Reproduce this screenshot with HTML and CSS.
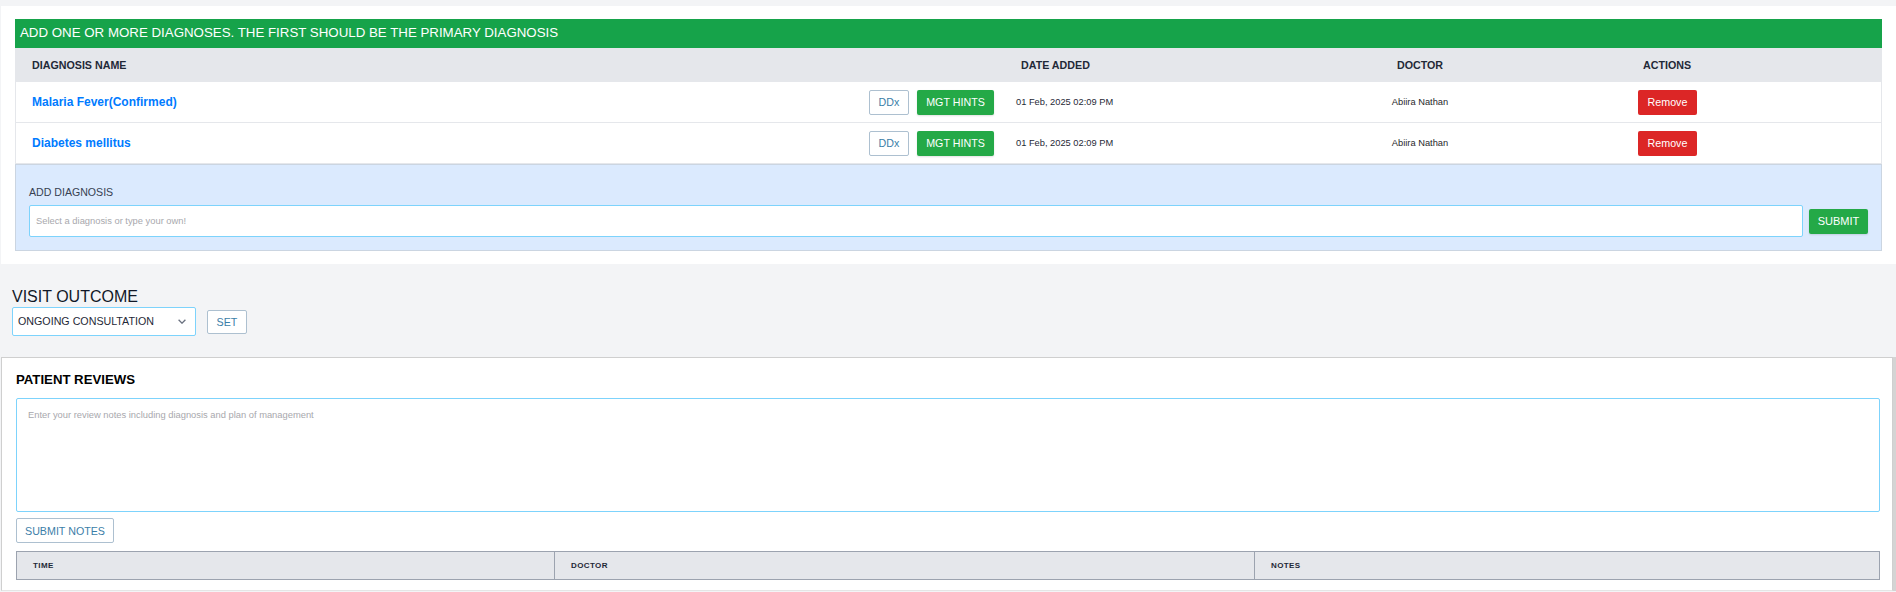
FILE: index.html
```html
<!DOCTYPE html>
<html lang="en">
<head>
<meta charset="utf-8">
<title>Diagnoses</title>
<link rel="stylesheet" href="styles.css">
</head>
<body>
<section class="panel">
  <div class="banner">ADD ONE OR MORE DIAGNOSES. THE FIRST SHOULD BE THE PRIMARY DIAGNOSIS</div>
  <table class="dx-table">
    <colgroup>
      <col class="col-name"><col class="col-date"><col class="col-doctor"><col class="col-actions">
    </colgroup>
    <thead>
      <tr>
        <th class="th-name">DIAGNOSIS NAME</th>
        <th class="th-date">DATE ADDED</th>
        <th class="th-center">DOCTOR</th>
        <th class="th-center">ACTIONS</th>
      </tr>
    </thead>
    <tbody>
      <tr>
        <td>
          <div class="name-cell">
            <a class="dx-link" href="#">Malaria Fever(Confirmed)</a>
            <div class="btn-group"><button class="btn btn-outline btn-ddx">DDx</button><button class="btn btn-green btn-hints">MGT HINTS</button></div>
          </div>
        </td>
        <td class="td-date">01 Feb, 2025 02:09 PM</td>
        <td class="td-doctor">Abiira Nathan</td>
        <td class="td-actions"><button class="btn btn-red">Remove</button></td>
      </tr>
      <tr>
        <td>
          <div class="name-cell">
            <a class="dx-link" href="#">Diabetes mellitus</a>
            <div class="btn-group"><button class="btn btn-outline btn-ddx">DDx</button><button class="btn btn-green btn-hints">MGT HINTS</button></div>
          </div>
        </td>
        <td class="td-date">01 Feb, 2025 02:09 PM</td>
        <td class="td-doctor">Abiira Nathan</td>
        <td class="td-actions"><button class="btn btn-red">Remove</button></td>
      </tr>
    </tbody>
  </table>
  <div class="add-box">
    <label class="add-label" for="dx">ADD DIAGNOSIS</label>
    <div class="add-row">
      <input id="dx" class="add-input" type="text" placeholder="Select a diagnosis or type your own!">
      <button class="btn btn-green btn-submit">SUBMIT</button>
    </div>
  </div>
</section>

<section class="outcome">
  <h2 class="outcome-title">VISIT OUTCOME</h2>
  <div class="outcome-row">
    <div class="select">
      <span>ONGOING CONSULTATION</span>
      <svg class="chev" viewBox="0 0 8 5" width="8" height="5" aria-hidden="true"><path d="M.6.8L4 4.2 7.4.8" fill="none" stroke="#6b7280" stroke-width="1.3"/></svg>
    </div>
    <button class="btn btn-outline btn-set">SET</button>
  </div>
</section>

<section class="reviews">
  <h2 class="reviews-title">PATIENT REVIEWS</h2>
  <textarea class="notes" placeholder="Enter your review notes including diagnosis and plan of management"></textarea>
  <button class="btn btn-outline btn-notes">SUBMIT NOTES</button>
  <table class="notes-table">
    <colgroup><col class="col-time"><col class="col-ndoc"><col></colgroup>
    <thead><tr><th>TIME</th><th>DOCTOR</th><th>NOTES</th></tr></thead>
  </table>
</section>
</body>
</html>
```
FILE: styles.css
```css
* { box-sizing: border-box; }
html, body { margin: 0; padding: 0; height: 592px; overflow: hidden; }
body { background: #f3f4f6; font-family: "Liberation Sans", Arial, sans-serif; color: #1f2937; }

.panel { margin: 6px 0 0 1px; height: 258px; padding: 13px 14px; background: #fff; }
.banner { height: 29px; line-height: 28px; padding-left: 5px; background: #16a34a; color: #fff; font-size: 13.3px; width: 1867px; }

.dx-table { width: 1867px; border-collapse: separate; border-spacing: 0; table-layout: fixed; background: #fff; }
.col-name { width: 985px; }
.col-date { width: 388px; }
.col-doctor { width: 64px; }
.dx-table th { height: 34px; background: #e5e7eb; font-size: 10.7px; font-weight: 700; color: #1f2937; padding: 0; white-space: nowrap; }
.th-name { text-align: left; padding-left: 17px !important; }
.th-date { text-align: left; padding-left: 21px !important; }
.th-center { text-align: center; }
.dx-table td { height: 41px; padding: 0; border-bottom: 1px solid #e5e7eb; font-size: 9.3px; white-space: nowrap; }
.dx-table tbody tr td:first-child { border-left: 1px solid #e5e7eb; }
.dx-table tbody tr td:last-child { border-right: 1px solid #e5e7eb; }
.name-cell { display: flex; align-items: center; justify-content: space-between; padding-left: 16px; padding-right: 6px; }
.dx-link { color: #007bff; font-size: 12px; font-weight: 700; text-decoration: none; }
.btn-group { display: flex; gap: 8px; }
.td-date { padding-left: 16px !important; color: #1f2937; }
.td-doctor { text-align: center; color: #27272a; }
.td-actions { text-align: center; padding-left: 2px !important; }

.btn { display: inline-block; height: 25px; padding: 0; border-radius: 2px; font-family: inherit; font-size: 10.7px; cursor: pointer; }
.btn-outline { background: #fff; border: 1px solid #adc0d0; color: #3b7ea8; }
.btn-green { background: #24a947; border: 0; color: #fff; box-shadow: 0 1px 2px rgba(0,0,0,.12); }
.btn-red { width: 59px; background: #dc2626; border: 0; color: #fff; }
.btn-ddx { width: 40px; }
.btn-hints { width: 77px; }

.add-box { width: 1867px; height: 87px; padding: 20px 13px 0 13px; background: #dbeafe; border: 1px solid #cbd5e1; }
.add-label { display: block; font-size: 10.6px; line-height: 14px; color: #374151; }
.add-row { display: flex; align-items: center; gap: 6px; margin-top: 6px; }
.add-input { flex: 1; height: 32px; padding: 0 6px; border: 1px solid #7dd3fc; border-radius: 2px; background: #fff; font-family: inherit; font-size: 9.35px; outline: 0; }
.add-input::placeholder, .notes::placeholder { color: #a8a8ad; opacity: 1; }
.btn-submit { width: 59px; font-size: 11px; }

.outcome { padding: 23px 0 0 12px; height: 93px; }
.outcome-title { margin: 0 0 1px; font-size: 16px; font-weight: 400; line-height: 19px; color: #111827; }
.outcome-row { display: flex; align-items: center; gap: 11px; }
.select { display: flex; align-items: center; justify-content: space-between; width: 184px; height: 29px; padding: 0 9px 1px 5px; background: #fff; border: 1px solid #7dd3fc; border-radius: 2px; font-size: 10.7px; color: #1f2937; }
.btn-set { width: 40px; height: 24px; }

.reviews { margin-left: 1px; width: 1892px; height: 234px; padding: 0 14px; background: #fff; border: 1px solid #cfcfcf; border-bottom-color: #e5e5e5; box-shadow: 3px 0 0 #d4d4d4; }
.reviews-title { margin: 0; padding-top: 14px; height: 40px; font-size: 13.2px; line-height: 16px; font-weight: 700; color: #000; }
.notes { display: block; width: 1864px; height: 114px; padding: 11px; border: 1px solid #7dd3fc; border-radius: 2px; background: #fff; font-family: inherit; font-size: 9.35px; resize: none; outline: 0; }
.btn-notes { display: block; width: 98px; height: 25px; margin-top: 6px; }
.notes-table { width: 1864px; margin-top: 8px; border-collapse: collapse; table-layout: fixed; }
.col-time { width: 538px; }
.col-ndoc { width: 700px; }
.notes-table th { height: 28px; padding: 0 0 1px 16px; background: #e5e7eb; border: 1px solid #9ca3af; text-align: left; font-size: 8px; font-weight: 700; letter-spacing: .05em; color: #1f2937; }
```
